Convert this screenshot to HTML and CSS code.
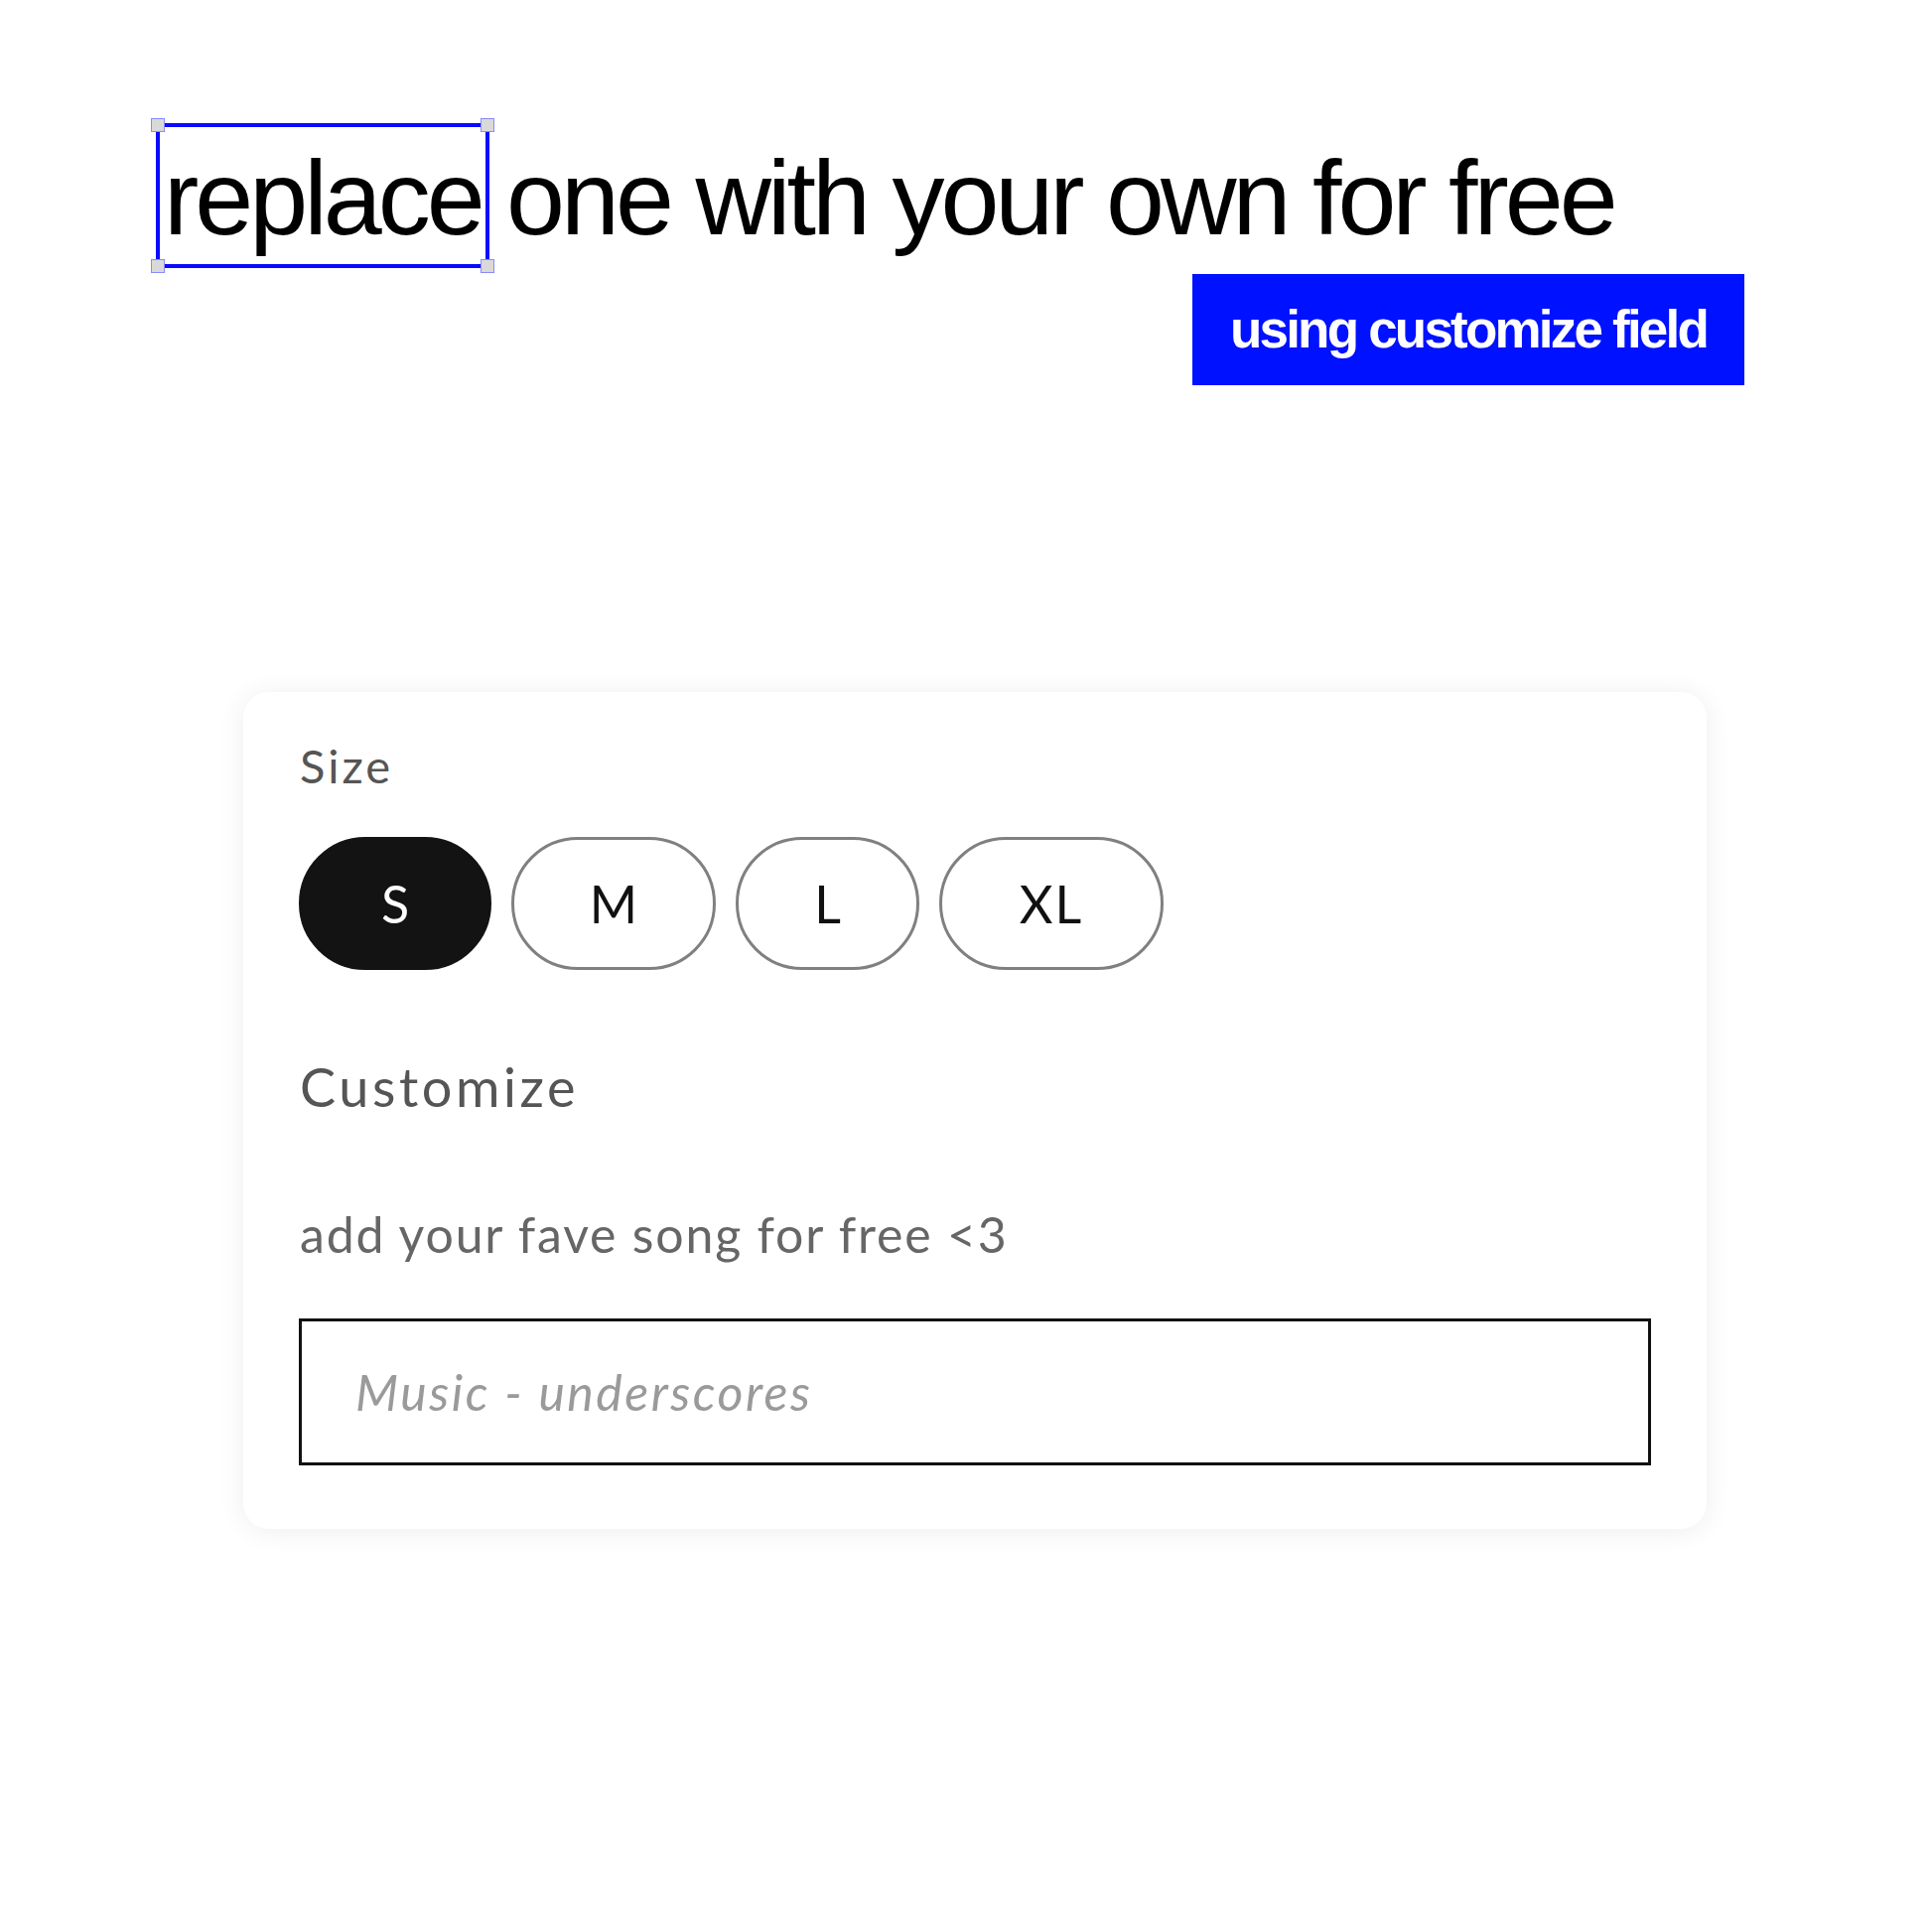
FILE: index.html
```html
<!DOCTYPE html>
<html lang="en">
<head>
<meta charset="utf-8">
<title>Customize field</title>
<link rel="stylesheet" href="styles.css">
</head>
<body>
<div class="page">
  <header class="top">
    <h1 class="headline"><span class="sel">replace<span class="h tl"></span><span class="h tr"></span><span class="h bl"></span><span class="h br"></span></span> one with your own for free</h1>
    <div class="tag">using customize field</div>
  </header>

  <section class="card">
    <div class="label size-label">Size</div>
    <div class="sizes">
      <button class="pill pill-s active">S</button>
      <button class="pill pill-m">M</button>
      <button class="pill pill-l">L</button>
      <button class="pill pill-xl">XL</button>
    </div>
    <div class="label custom-label">Customize</div>
    <div class="hint">add your fave song for free &lt;3</div>
    <input class="field" type="text" placeholder="Music - underscores">
  </section>
</div>
</body>
</html>
```

FILE: styles.css
```css
* { box-sizing: border-box; }

html, body {
  margin: 0;
  padding: 0;
  background: #ffffff;
}

.page {
  display: flex;
  flex-direction: column;
  width: 1946px;
  min-height: 1946px;
}

.top {
  display: flex;
  flex-direction: column;
  align-items: flex-start;
  width: 1757px;
  padding: 146px 0 0 165px;
}

.headline {
  margin: 0;
  font-family: "Liberation Sans", Arial, sans-serif;
  font-weight: 400;
  font-size: 106px;
  line-height: 106px;
  letter-spacing: -4px;
  color: #000;
  white-space: nowrap;
}

.sel {
  position: relative;
}

.sel::before {
  content: "";
  position: absolute;
  left: -8px;
  right: -8px;
  top: -16px;
  bottom: -12px;
  border: 4px solid #0a0aff;
  pointer-events: none;
}

.h {
  position: absolute;
  width: 14px;
  height: 14px;
  background: #d9d9d9;
  border: 1px solid #8a8aff;
}

.h.tl { left: -13px; top: -21px; }
.h.tr { right: -13px; top: -21px; }
.h.bl { left: -13px; bottom: -17px; }
.h.br { right: -13px; bottom: -17px; }

.tag {
  align-self: flex-end;
  margin-top: 24px;
  width: 556px;
  height: 112px;
  background: #0011ff;
  color: #fff;
  font-family: "Liberation Sans", Arial, sans-serif;
  font-weight: 700;
  font-size: 53px;
  line-height: 112px;
  letter-spacing: -2.8px;
  text-align: center;
  white-space: nowrap;
}

.card {
  display: flex;
  flex-direction: column;
  align-items: flex-start;
  margin: 309px 0 0 245px;
  width: 1474px;
  padding: 51px 56px 64px 56px;
  background: #fff;
  border-radius: 26px;
  box-shadow: 0 2px 28px rgba(0, 0, 0, 0.07);
  font-family: Lato, "Noto Sans", sans-serif;
}

.label {
  line-height: 1;
  color: #555;
}

.size-label {
  font-size: 47px;
  letter-spacing: 3px;
  padding-left: 1px;
}

.sizes {
  display: flex;
  gap: 20px;
  margin-top: 48px;
}

.pill {
  height: 134px;
  padding: 0;
  border: 3px solid #808080;
  border-radius: 67px;
  background: #fff;
  color: #111;
  font-family: Lato, "Noto Sans", sans-serif;
  font-size: 52px;
  font-weight: 400;
  line-height: 1;
  text-align: center;
}

.pill-s { width: 194px; }
.pill-m { width: 206px; }
.pill-l { width: 185px; }
.pill-xl { width: 226px; letter-spacing: 2px; }

.pill.active {
  background: #131313;
  border-color: #131313;
  color: #fff;
}

.custom-label {
  margin-top: 91px;
  font-size: 54px;
  letter-spacing: 3.6px;
  padding-left: 1px;
}

.hint {
  margin-top: 95px;
  font-size: 50px;
  line-height: 52px;
  letter-spacing: 1.8px;
  color: #666;
  padding-left: 1px;
}

.field {
  margin-top: 59px;
  width: 100%;
  height: 148px;
  padding: 0 54px;
  border: 3px solid #111;
  border-radius: 0;
  background: #fff;
  font-family: Lato, "Noto Sans", sans-serif;
  font-size: 50px;
  font-style: italic;
  letter-spacing: 2.5px;
  color: #333;
  outline: none;
}

.field::placeholder {
  color: #9a9a9a;
  font-style: italic;
  letter-spacing: 2.5px;
}
```
